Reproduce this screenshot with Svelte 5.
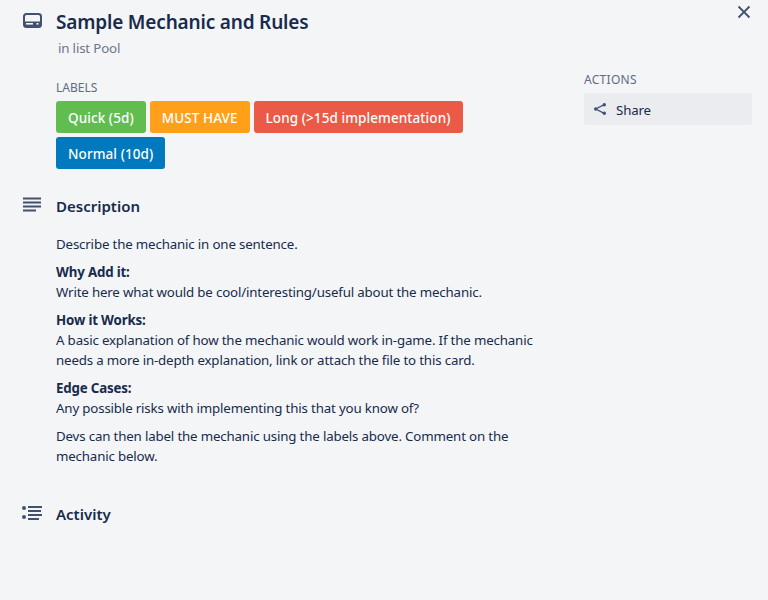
<script>
  const labels = [
    { name: 'Quick (5d)', color: '#61bd4f' },
    { name: 'MUST HAVE', color: '#ff9f1a' },
    { name: 'Long (>15d implementation)', color: '#eb5a46' },
    { name: 'Normal (10d)', color: '#0079bf' }
  ];
</script>

<div class="window">
  <button class="close" aria-label="Close">
    <svg width="14" height="14" viewBox="0 0 14 14">
      <path d="M1.5 1.5l11 11M12.5 1.5l-11 11" stroke="#42526e" stroke-width="1.8" fill="none" />
    </svg>
  </button>

  <header class="section head">
    <svg class="icon" width="20" height="16" viewBox="0 0 20 16">
      <rect x="2" y="1" width="17" height="13" rx="2.5" fill="none" stroke="#42526e" stroke-width="2" />
      <rect x="2" y="8.5" width="17" height="5" fill="#42526e" />
      <rect x="4" y="10" width="7" height="1.6" fill="#f4f5f7" />
      <rect x="14.5" y="10" width="2" height="1.6" fill="#f4f5f7" />
    </svg>
    <div>
      <h1>Sample Mechanic and Rules</h1>
      <p class="list">in list Pool</p>
    </div>
  </header>

  <div class="columns">
    <main>
      <div class="labels">
        <h3>LABELS</h3>
        <div class="chips">
          {#each labels as label}
            <span class="chip" style="background: {label.color}">{label.name}</span>
          {/each}
        </div>
      </div>

      <section class="section description">
        <svg class="icon" width="20" height="16" viewBox="0 0 20 16">
          <path d="M1 1.5h18M1 5.5h18M1 9.5h18M1 13.5h13" stroke="#42526e" stroke-width="2" fill="none" />
        </svg>
        <div>
          <h2>Description</h2>
          <div class="body">
            <p>Describe the mechanic in one sentence.</p>
            <p><strong>Why Add it:</strong><br />Write here what would be cool/interesting/useful about the mechanic.</p>
            <p><strong>How it Works:</strong><br />A basic explanation of how the mechanic would work in-game. If the mechanic needs a more in-depth explanation, link or attach the file to this card.</p>
            <p><strong>Edge Cases:</strong><br />Any possible risks with implementing this that you know of?</p>
            <p>Devs can then label the mechanic using the labels above. Comment on the mechanic below.</p>
          </div>
        </div>
      </section>

      <section class="section activity">
        <svg class="icon" width="20" height="16" viewBox="0 0 20 16">
          <circle cx="2" cy="3" r="2" fill="#42526e" />
          <circle cx="2" cy="12" r="2" fill="#42526e" />
          <path d="M6 2h14M6 6h13M6 10h14M6 14h11" stroke="#42526e" stroke-width="2" fill="none" />
        </svg>
        <h2>Activity</h2>
      </section>
    </main>

    <aside>
      <h3>ACTIONS</h3>
      <button class="action">
        <svg width="14" height="14" viewBox="0 0 14 14">
          <path d="M11.3 2.7L2.7 7l8.6 4.3" stroke="#42526e" stroke-width="1.3" fill="none" />
          <circle cx="11.3" cy="2.7" r="1.7" fill="#42526e" />
          <circle cx="2.7" cy="7" r="1.7" fill="#42526e" />
          <circle cx="11.3" cy="11.3" r="1.7" fill="#42526e" />
        </svg>
        <span>Share</span>
      </button>
    </aside>
  </div>
</div>

<style>
  :global(body) {
    margin: 0;
    background: #f4f5f7;
  }

  .window {
    position: relative;
    box-sizing: border-box;
    height: 600px;
    overflow: hidden;
    padding: 10px 16px 0 22px;
    font-family: "Noto Sans", "Open Sans", sans-serif;
    font-size: 13.3px;
    letter-spacing: -0.165px;
    line-height: 20px;
    color: #172b4d;
  }

  .close {
    position: absolute;
    top: 5px;
    right: 17px;
    padding: 0;
    border: none;
    background: none;
  }

  .section {
    display: flex;
    gap: 14px;
  }

  .icon {
    flex: none;
    margin-top: 3px;
  }

  .head {
    height: 66px;
  }

  h1 {
    margin: 0;
    font-size: 19px;
    line-height: 24px;
    font-weight: 600;
    letter-spacing: -0.18px;
  }

  .list {
    margin: 4px 0 0 2px;
    color: #6b778c;
  }

  .columns {
    display: flex;
  }

  main {
    width: 514px;
    margin-right: 48px;
  }

  h3 {
    margin: 0;
    font-size: 12px;
    line-height: 16px;
    font-weight: 400;
    letter-spacing: 0;
    color: #5e6c84;
  }

  .labels {
    margin-left: 34px;
  }

  .labels h3 {
    margin-top: 4px;
    margin-bottom: 5px;
  }

  .chips {
    display: flex;
    flex-wrap: wrap;
    gap: 4px;
  }

  .chip {
    height: 32px;
    padding: 0 12px;
    border-radius: 3px;
    font-size: 13.5px;
    line-height: 34px;
    font-weight: 500;
    letter-spacing: 0.08px;
    color: #fff;
  }

  .description {
    margin-top: 25px;
  }

  h2 {
    margin: 0;
    font-size: 15px;
    line-height: 24px;
    font-weight: 600;
    letter-spacing: 0;
  }

  .body {
    margin-top: 16px;
  }

  .body p {
    margin: 0 0 8px;
  }

  strong {
    font-weight: 700;
  }

  .activity {
    margin-top: 28px;
    color: #172b4d;
  }

  aside {
    width: 168px;
    margin-top: -4px;
  }

  aside h3 {
    margin-bottom: 5px;
    letter-spacing: 0.3px;
  }

  .action {
    display: flex;
    align-items: center;
    gap: 9px;
    box-sizing: border-box;
    width: 100%;
    height: 32px;
    padding: 0 0 0 9px;
    border: none;
    border-radius: 3px;
    background: #ebecf0;
    font: inherit;
    letter-spacing: inherit;
    color: #172b4d;
  }

  .action span {
    padding-top: 1px;
  }
</style>
